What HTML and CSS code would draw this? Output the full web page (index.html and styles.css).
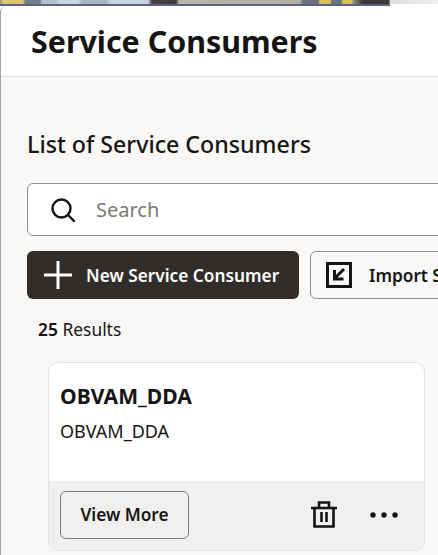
FILE: index.html
```html
<!DOCTYPE html>
<html>
  <head>
    <title>Service Consumers</title>
    <link rel="stylesheet" href="styles.css">
  </head>
  <body>
    <div class="backdrop"></div>
    <div class="edge"></div>
    <div class="panel">
      <header class="panel-header">
        <h1 class="panel-title">Service Consumers</h1>
      </header>
      <main class="panel-body">
        <h2 class="list-title">List of Service Consumers</h2>
        <div class="search-box">
          <svg class="search-icon" viewBox="0 0 24 24" fill="none" stroke="#161513" stroke-width="2.4">
            <circle cx="10.500" cy="10.500" r="9"/>
            <path d="M17 17l7 7"/>
          </svg>
          <span class="search-text">Search</span>
        </div>
        <div class="actions">
          <button class="btn btn-primary">
            <svg class="plus-icon" viewBox="0 0 28 28" stroke="#fff" stroke-width="3">
              <path d="M14 0v28M0 14h28"/>
            </svg>
            New Service Consumer
          </button>
          <button class="btn btn-outline">
            <svg class="import-icon" viewBox="0 0 26 26" fill="none" stroke="#161513">
              <rect x="1.500" y="1.500" width="23" height="23" stroke-width="3"/>
              <path d="M18 7L9 16" stroke-width="3"/>
              <path d="M8.500 8v9h9" stroke-width="3"/>
            </svg>
            Import Service Consumer
          </button>
        </div>
        <p class="results"><b>25</b> Results</p>
        <article class="card">
          <div class="card-main">
            <h3 class="card-name">OBVAM_DDA</h3>
            <p class="card-desc">OBVAM_DDA</p>
          </div>
          <div class="card-footer">
            <button class="btn btn-view">View More</button>
            <svg class="trash-icon" viewBox="0 0 26 27" fill="none" stroke="#161513" stroke-width="2.6">
              <path d="M0 7h26"/>
              <path d="M8 7V1.500h10V7"/>
              <path d="M3.500 7v18.500h19V7"/>
              <path d="M10.500 11v10M15.500 11v10"/>
            </svg>
            <svg class="more-icon" viewBox="0 0 28 6" fill="#161513">
              <circle cx="3" cy="3" r="2.700"/>
              <circle cx="14" cy="3" r="2.700"/>
              <circle cx="25" cy="3" r="2.700"/>
            </svg>
          </div>
        </article>
      </main>
    </div>
  </body>
</html>
```

FILE: styles.css
```css
* {
  margin: 0;
  padding: 0;
  box-sizing: border-box;
  font-family: "Noto Sans", sans-serif;
}

html,
body {
  height: 555px;
  overflow: hidden;
}

body {
  background: #fff;
  color: #161513;
}

/* strip of the desktop picture above the panel */
.backdrop {
  height: 4px;
  background: linear-gradient(
    90deg,
    #8d8f80 0,
    #e3c463 3px,
    #e3c463 23px,
    #6f7f8c 25px,
    #6f7f8c 40px,
    #b4c1cd 42px,
    #b4c1cd 56px,
    #cbd5de 60px,
    #cbd5de 78px,
    #a9b6c2 82px,
    #a9b6c2 106px,
    #c8d4e0 110px,
    #c8d4e0 148px,
    #45413e 152px,
    #3f3c3a 176px,
    #b9b3a8 179px,
    #b5aea3 300px,
    #66747f 303px,
    #66747f 318px,
    #e0c04f 320px,
    #e0c04f 330px,
    #66747f 332px,
    #66747f 341px,
    #e0c04f 343px,
    #e0c04f 351px,
    #8a8a80 354px,
    #3a3734 363px,
    #3a3734 389px,
    #dddcda 390px,
    #efeeec 438px
  );
}

.edge {
  width: 390px;
  height: 2px;
  background: #5b6285;
}

.panel {
  height: 549px;
  width: 450px;
  background: #f9f8f6;
  border-left: 1px solid #a3a3a3;
  border-top-left-radius: 6px;
  overflow: hidden;
}

.panel-header {
  height: 71px;
  padding: 15px 0 0 30px;
  background: #fff;
  border-bottom: 1px solid #e0dfdd;
}

.panel-title {
  font-size: 30.4px;
  line-height: 42px;
  font-weight: 700;
}

.panel-body {
  padding: 51px 0 0 26px;
}

.list-title {
  font-size: 23.2px;
  line-height: 32px;
  font-weight: 500;
  margin-bottom: 23px;
}

.search-box {
  display: flex;
  align-items: center;
  width: 440px;
  height: 53px;
  padding-left: 23px;
  background: #fff;
  border: 1px solid #908e8c;
  border-radius: 6px;
  margin-bottom: 15px;
}

.search-icon {
  width: 24px;
  height: 24px;
  margin-right: 21px;
}

.search-text {
  font-size: 20px;
  color: #7b7977;
}

.actions {
  display: flex;
  gap: 11px;
  margin-bottom: 18px;
}

.btn {
  display: flex;
  align-items: center;
  height: 48px;
  border-radius: 6px;
  font-size: 17.25px;
  font-weight: 600;
  white-space: nowrap;
}

.btn-primary {
  width: 272px;
  flex: none;
  padding-left: 17px;
  background: #312d2a;
  color: #fff;
  border: none;
}

.plus-icon {
  width: 28px;
  height: 28px;
  margin-right: 14px;
}

.btn-outline {
  flex: none;
  padding-left: 15px;
  background: transparent;
  color: #161513;
  border: 1px solid #908e8c;
}

.import-icon {
  width: 26px;
  height: 26px;
  margin-right: 17px;
}

.results {
  font-size: 17.4px;
  line-height: 24px;
  padding-left: 11px;
  margin-bottom: 21px;
}

.results b {
  font-weight: 600;
}

.card {
  width: 377px;
  margin-left: 21px;
  height: 189px;
  border: 1px solid #e4e3e1;
  border-radius: 10px;
  overflow: hidden;
  background: #fff;
}

.card-main {
  height: 118px;
  padding: 19px 11px 0;
}

.card-name {
  font-size: 21.1px;
  line-height: 28px;
  font-weight: 700;
  margin-bottom: 9px;
}

.card-desc {
  font-size: 18px;
  line-height: 24px;
}

.card-footer {
  display: flex;
  align-items: center;
  height: 69px;
  padding: 0 26px 2px 11px;
  background: #f0efed;
}

.btn-view {
  justify-content: center;
  width: 129px;
  background: transparent;
  color: #161513;
  border: 1px solid #7e7c7a;
}

.trash-icon {
  width: 26px;
  height: 27px;
  margin-left: auto;
  margin-right: 33px;
}

.more-icon {
  width: 28px;
  height: 6px;
}
```
